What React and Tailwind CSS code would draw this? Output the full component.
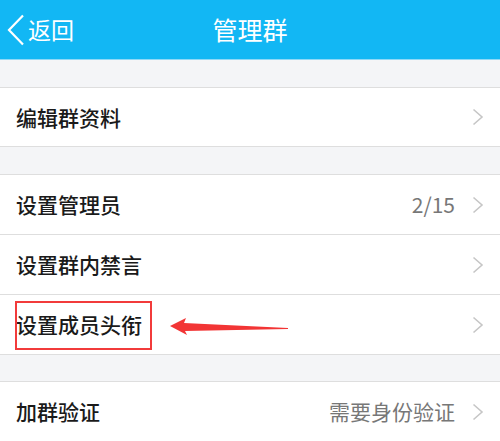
import React from 'react'

const font = { fontFamily: '"Noto Sans CJK SC", "Noto Sans", sans-serif' }

function Chevron() {
    return (
        <svg width="12" height="18" viewBox="0 0 12 18" className="shrink-0">
            <path d="M1.5 1.5 L10 9 L1.5 16.5" fill="none" stroke="#c6c6c6" strokeWidth="1.6" />
        </svg>
    )
}

function Row({ label, value, h = 'h-[60px]', children }) {
    return (
        <div className={`relative flex items-center justify-between bg-white border-b border-[#dedede] pl-4 pr-[16px] ${h}`}>
            <span className="text-[21px] font-medium text-[#1a1a1a] leading-none">{label}</span>
            <div className="flex items-center gap-[17px]">
                {value && <span className="text-[21px] text-[#777777] leading-none">{value}</span>}
                <Chevron />
            </div>
            {children}
        </div>
    )
}

export default function App() {
    return (
        <div className="w-[500px] h-[441px] overflow-hidden bg-[#f4f5f7]" style={font}>
            {/* Header */}
            <div className="relative flex items-center justify-center h-[60px] bg-[#12b7f4] border-b border-[#8fd9f7]">
                <div className="absolute left-[7px] top-0 h-full flex items-center gap-[3px]">
                    <svg width="18" height="32" viewBox="0 0 18 32">
                        <path d="M16 1.5 L2 16 L16 30.5" fill="none" stroke="#ffffff" strokeWidth="2.2" />
                    </svg>
                    <span className="text-[23px] text-white leading-none">返回</span>
                </div>
                <span className="text-[25px] text-white leading-none">管理群</span>
            </div>

            <div className="h-[28px] border-b border-[#dedede]" />
            <Row label="编辑群资料" h="h-[59px]" />

            <div className="h-[28px] border-b border-[#dedede]" />
            <Row label="设置管理员" value="2/15" />
            <Row label="设置群内禁言" />
            <Row label="设置成员头衔">
                <div className="absolute left-[15px] top-[6px] w-[137px] h-[49px] border-2 border-[#f23b3b]" />
                <svg className="absolute left-[168px] top-[19px]" width="122" height="22" viewBox="0 0 122 22">
                    <path d="M2 12 L18 4 L16 9 L120 14 L120 15 L17 17 L19 21 Z" fill="#f23535" />
                </svg>
            </Row>

            <div className="h-[27px] border-b border-[#dedede]" />
            <Row label="加群验证" value="需要身份验证" />
        </div>
    )
}
